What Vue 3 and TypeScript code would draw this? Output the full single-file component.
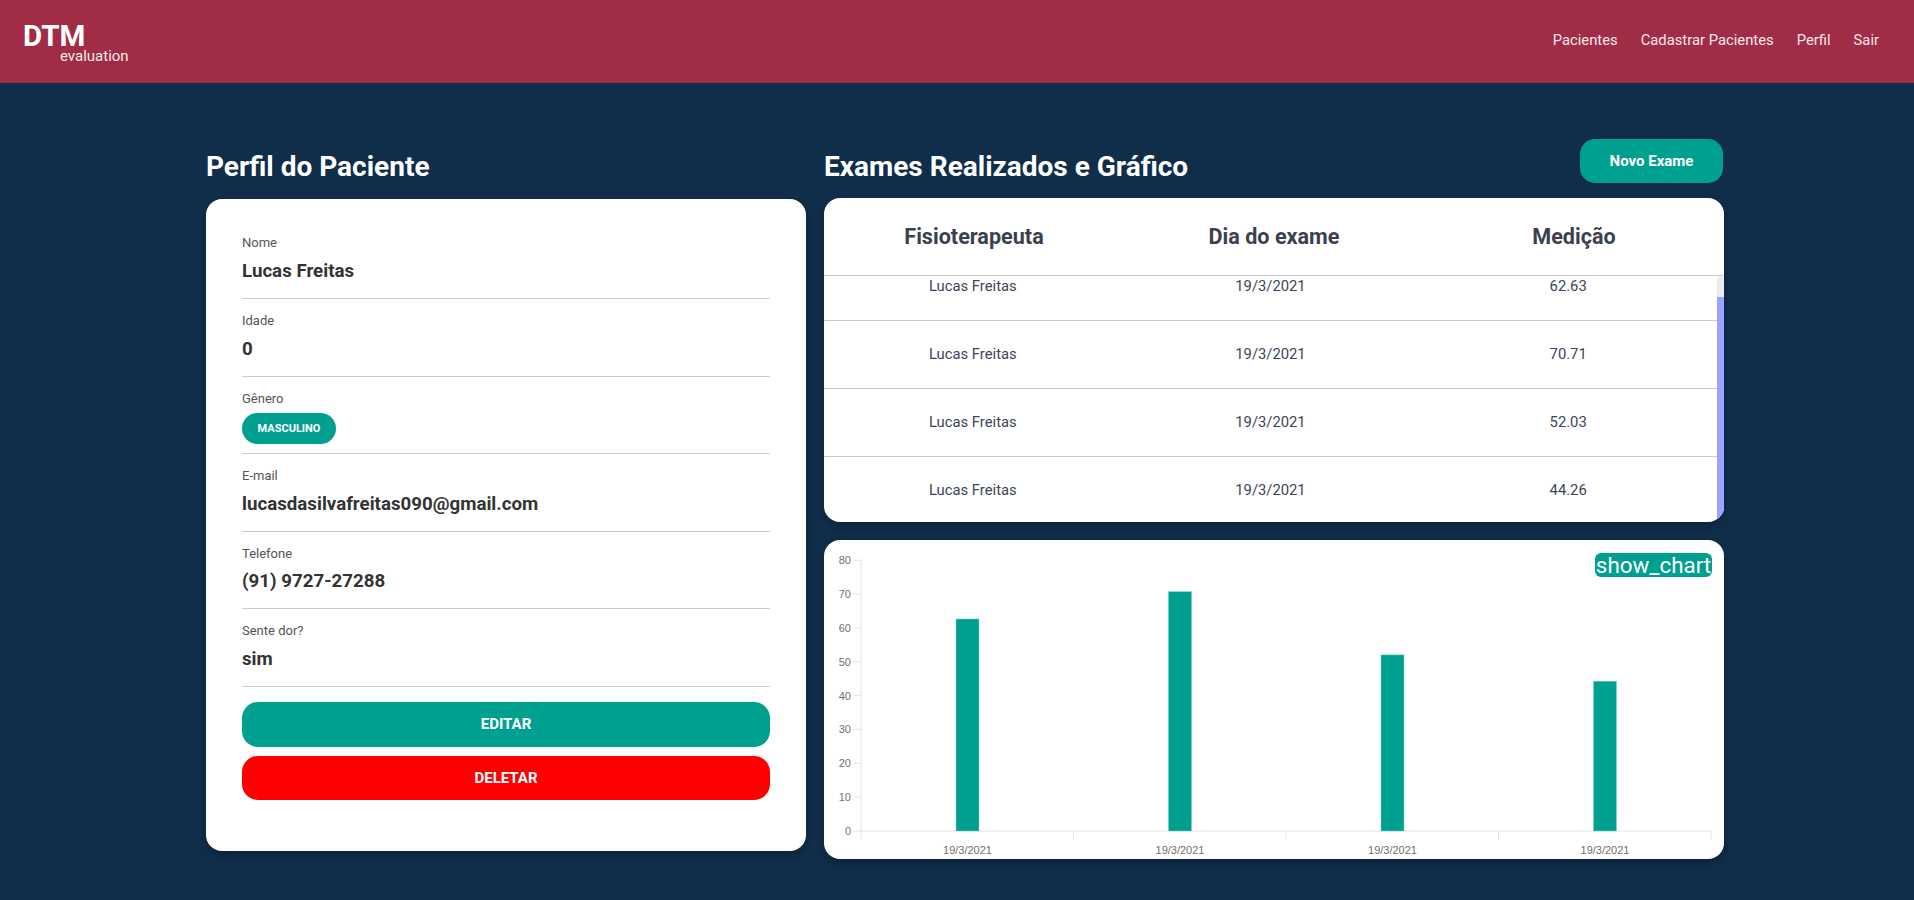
<template>
  <div class="page">
    <header class="topbar">
      <div class="brand">
        <span class="brand-name">DTM</span>
        <span class="brand-sub">evaluation</span>
      </div>
      <nav class="nav">
        <a v-for="link in links" :key="link" class="nav-link">{{ link }}</a>
      </nav>
    </header>

    <main class="content">
      <section class="col-left">
        <h2 class="title title-left">Perfil do Paciente</h2>
        <div class="card profile">
          <div v-for="f in fields" :key="f.label" class="field">
            <div class="field-label">{{ f.label }}</div>
            <span v-if="f.chip" class="chip">{{ f.value }}</span>
            <div v-else class="field-value">{{ f.value }}</div>
          </div>
          <button class="btn btn-edit">EDITAR</button>
          <button class="btn btn-delete">DELETAR</button>
        </div>
      </section>

      <section class="col-right">
        <div class="right-head">
          <h2 class="title">Exames Realizados e Gráfico</h2>
          <button class="btn-new">Novo Exame</button>
        </div>

        <div class="card table-card">
          <div class="table-head">
            <div>Fisioterapeuta</div>
            <div>Dia do exame</div>
            <div>Medição</div>
          </div>
          <div class="table-wrap">
            <div ref="tableBody" class="table-body">
              <div v-for="(e, i) in exams" :key="i" class="table-row">
                <div>{{ e.name }}</div>
                <div>{{ e.date }}</div>
                <div>{{ e.value.toFixed(2) }}</div>
              </div>
            </div>
            <div class="scroll-track"><div class="scroll-thumb"></div></div>
          </div>
        </div>

        <div class="card chart-card">
          <span class="chart-badge">show_chart</span>
          <svg class="chart" width="900" height="319" viewBox="824 540 900 319">
            <g v-for="t in yTicks" :key="t" class="tick">
              <line x1="853" x2="861" :y1="yOf(t)" :y2="yOf(t)" />
              <text x="851" :y="yOf(t) + 4" text-anchor="end">{{ t }}</text>
            </g>
            <line class="axis" x1="861" x2="861" y1="560" y2="840" />
            <line class="axis" x1="861" x2="1711" y1="831" y2="831" />
            <g v-for="(e, i) in exams" :key="i">
              <rect
                class="bar"
                :x="barX(i)"
                :y="yOf(e.value)"
                width="23"
                :height="831 - yOf(e.value)"
              />
              <line class="axis" :x1="861 + (i + 1) * 212.5" :x2="861 + (i + 1) * 212.5" y1="831" y2="840" />
              <text class="x-label" :x="barX(i) + 11.5" y="854" text-anchor="middle">{{ e.date }}</text>
            </g>
          </svg>
        </div>
      </section>
    </main>
  </div>
</template>

<script setup lang="ts">
import { onMounted, ref } from 'vue'

const links = ['Pacientes', 'Cadastrar Pacientes', 'Perfil', 'Sair']

const fields = [
  { label: 'Nome', value: 'Lucas Freitas' },
  { label: 'Idade', value: '0' },
  { label: 'Gênero', value: 'MASCULINO', chip: true },
  { label: 'E-mail', value: 'lucasdasilvafreitas090@gmail.com' },
  { label: 'Telefone', value: '(91) 9727-27288' },
  { label: 'Sente dor?', value: 'sim' },
]

const exams = [
  { name: 'Lucas Freitas', date: '19/3/2021', value: 62.63 },
  { name: 'Lucas Freitas', date: '19/3/2021', value: 70.71 },
  { name: 'Lucas Freitas', date: '19/3/2021', value: 52.03 },
  { name: 'Lucas Freitas', date: '19/3/2021', value: 44.26 },
]

const yTicks = [0, 10, 20, 30, 40, 50, 60, 70, 80]
const yOf = (v: number) => 831 - v * 3.385
const barX = (i: number) => 956 + i * 212.5

const tableBody = ref<HTMLElement | null>(null)
onMounted(() => {
  if (tableBody.value) tableBody.value.scrollTop = 23
})
</script>

<style>
html,
body {
  margin: 0;
  background: #102d4a;
}
</style>

<style scoped>
.page {
  min-height: 900px;
  background: #102d4a;
  font-family: Roboto, "Liberation Sans", sans-serif;
  overflow: hidden;
}
.topbar {
  height: 83px;
  background: #a02c46;
  display: flex;
  align-items: flex-start;
  justify-content: space-between;
  padding: 0 35px 0 23px;
  box-sizing: border-box;
}
.brand {
  display: flex;
  flex-direction: column;
  color: #fff;
  padding-top: 22px;
}
.brand-name {
  font-size: 29.5px;
  font-weight: 700;
  line-height: 28px;
}
.brand-sub {
  font-size: 15px;
  line-height: 12px;
  margin-left: 37px;
  color: #f6e9ec;
}
.nav {
  display: flex;
  gap: 23px;
  padding-top: 30px;
}
.nav-link {
  font-size: 14.8px;
  line-height: 20px;
  color: #f8e8ec;
}
.content {
  display: flex;
  gap: 18px;
  padding: 56px 0 0 206px;
}
.col-left {
  width: 600px;
}
.col-right {
  width: 900px;
  display: flex;
  flex-direction: column;
}
.title {
  margin: 0;
  font-size: 28px;
  font-weight: 700;
  line-height: 36px;
  color: #fff;
}
.title-left {
  height: 60px;
  padding-top: 10px;
  box-sizing: border-box;
}
.right-head {
  height: 59px;
  display: flex;
  justify-content: space-between;
  align-items: flex-start;
  padding-right: 1px;
}
.right-head .title {
  padding-top: 10px;
}
.btn-new {
  width: 143px;
  height: 44px;
  border: 0;
  border-radius: 15px;
  background: #00a091;
  color: #fff;
  font-family: inherit;
  font-size: 15px;
  font-weight: 700;
}
.card {
  background: #fff;
  border-radius: 16px;
  box-shadow: 0 4px 8px rgba(0, 0, 0, 0.2);
}
.profile {
  height: 652px;
  padding: 22.4px 36px 0;
  box-sizing: border-box;
}
.field {
  height: 77.6px;
  box-sizing: border-box;
  padding-top: 14px;
  border-bottom: 1px solid #ccc;
}
.field-label {
  font-size: 13px;
  line-height: 16px;
  color: #555;
  margin-bottom: 7.6px;
}
.field-label:has(+ .chip) {
  margin-bottom: 6px;
}
.field-value {
  font-size: 18.72px;
  font-weight: 700;
  line-height: 24px;
  color: #333;
}
.chip {
  display: block;
  width: 94px;
  height: 31px;
  line-height: 31px;
  text-align: center;
  border-radius: 16px;
  background: #00a091;
  color: #fff;
  font-size: 11px;
  font-weight: 700;
}
.btn {
  display: block;
  width: 100%;
  border: 0;
  border-radius: 16px;
  color: #fff;
  font-family: inherit;
  font-size: 15px;
  font-weight: 700;
}
.btn-edit {
  height: 45px;
  margin-top: 15px;
  background: #00a091;
}
.btn-delete {
  height: 44px;
  margin-top: 9px;
  background: #f00;
}
.table-card {
  height: 324px;
  overflow: hidden;
}
.table-head {
  height: 77px;
  display: grid;
  grid-template-columns: repeat(3, 1fr);
  align-items: center;
  text-align: center;
  font-size: 21.6px;
  font-weight: 700;
  color: #3c3f4f;
  border-bottom: 1px solid #ccc;
}
.table-wrap {
  position: relative;
  height: 246px;
}
.table-body {
  height: 246px;
  overflow: hidden;
  margin-right: 7px;
}
.scroll-track {
  position: absolute;
  top: 0;
  right: 0;
  bottom: 0;
  width: 7px;
  background: #ececec;
  border-radius: 4px 4px 0 0;
}
.scroll-thumb {
  position: absolute;
  top: 21px;
  left: 0;
  right: 0;
  bottom: 0;
  background: #9aa3ff;
}
.table-row {
  height: 67px;
  display: grid;
  grid-template-columns: repeat(3, 1fr);
  align-items: start;
  line-height: 67px;
  text-align: center;
  font-size: 14.8px;
  color: #3d4558;
  border-bottom: 1px solid #ccc;
}
.table-row:last-child {
  border-bottom: 0;
}
.chart-card {
  position: relative;
  height: 319px;
  margin-top: 18px;
  overflow: hidden;
}
.chart-badge {
  position: absolute;
  top: 13px;
  right: 12px;
  width: 117px;
  height: 24px;
  line-height: 24px;
  text-align: center;
  white-space: nowrap;
  border-radius: 6px;
  background: #00a091;
  color: #fff;
  font-size: 22.4px;
}
.chart {
  display: block;
}
.chart text {
  font-family: "Liberation Sans", Arial, sans-serif;
  font-size: 11px;
  fill: #707070;
}
.axis,
.tick line {
  stroke: #e4e4e4;
  stroke-width: 1;
}
.bar {
  fill: #00a091;
  stroke: #7fcfc7;
  stroke-width: 0.5;
}
</style>
